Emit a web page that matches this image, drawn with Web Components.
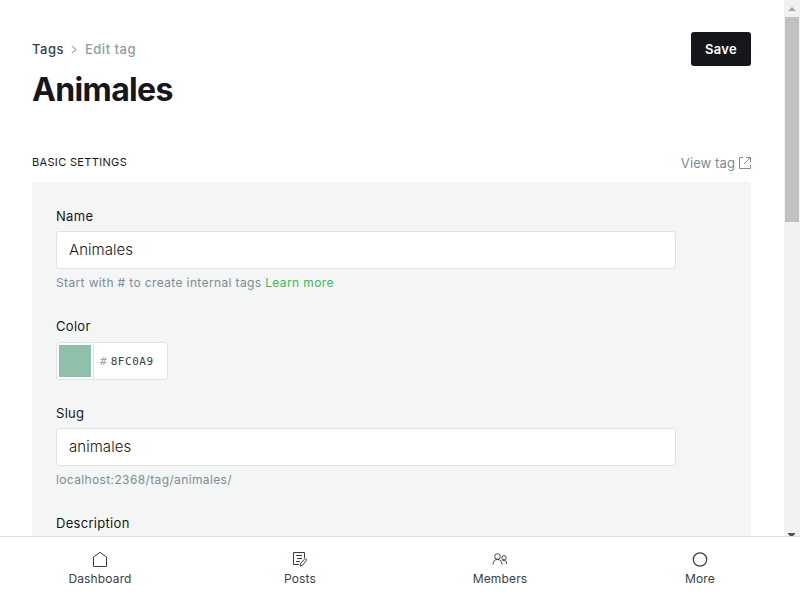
<!DOCTYPE html>
<html lang="en">
<head>
<meta charset="utf-8">
<title>Edit tag</title>
<style>
html,body{margin:0;height:100%;overflow:hidden;background:#fff}
body{font-family:Inter,"Open Sans",sans-serif;font-size:13px;color:#15171a}
</style>
</head>
<body>
<tag-app></tag-app>
<script>
const define=(name,html)=>{
  const t=document.createElement('template');
  t.innerHTML='<style>*{box-sizing:border-box}:host{box-sizing:border-box}</style>'+html;
  customElements.define(name,class extends HTMLElement{
    constructor(){super();this.attachShadow({mode:'open'}).append(t.content.cloneNode(true));}
  });
};

define('bread-crumbs',`<style>
:host{display:flex;align-items:center;height:20px;font-weight:500;letter-spacing:.5px;color:#343f52;line-height:20px}
svg{margin:0 8px 0 7px}
.cur{color:#8e9ca6}
</style><span><slot name="parent"></slot></span>
<svg width="6" height="9" viewBox="0 0 6 9" fill="none" stroke="#9aa8b1" stroke-width="1.1"><path d="M.8.8 5 4.5.8 8.2"/></svg>
<span class="cur"><slot></slot></span>`);

define('save-button',`<style>
:host{display:block}
button{display:block;width:60px;height:34px;border:0;border-radius:3px;padding:0;background:#15171a;color:#fff;font:600 13px/34px Inter,sans-serif;letter-spacing:.3px}
</style><button><slot></slot></button>`);

define('view-link',`<style>
:host{display:flex;align-items:center;gap:4px;color:#7c8b9a;letter-spacing:.1px;line-height:20px;padding-top:1px}
</style><span><slot></slot></span>
<svg width="12" height="12" viewBox="0 0 12 12" fill="none" stroke="#7c8b9a" stroke-width="1"><path d="M4 .5H.5v11h11V8M7 .5h4.500V5M11.500.5 5 7"/></svg>`);

define('form-field',`<style>
:host{display:block;width:620px}
.label{height:20px;line-height:20px;font-weight:400;letter-spacing:.3px;margin-bottom:5px}
.help{height:20px;line-height:20px;margin-top:4px;font-size:12px;color:#7c8b9a;letter-spacing:.37px}
:host([plain]) .help{display:none}
::slotted(a){color:#3fb94d}
</style><div class="label"><slot name="label"></slot></div><slot></slot><div class="help"><slot name="help"></slot></div>`);

define('text-box',`<style>
:host{display:block;height:38px;border:1px solid #dfe3e3;border-radius:3px;background:#fff;padding:0 12px;font-size:15px;font-weight:300;line-height:36px;color:#15171a;letter-spacing:.05px}
</style><slot></slot>`);

define('color-box',`<style>
:host{display:flex;width:112px;height:38px;margin-top:6px;border:1px solid #dfe3e3;border-radius:3px;background:#fff;font:11px/37px "DejaVu Sans Mono","Liberation Mono",monospace;color:#394047}
.sw{width:37px;height:36px;padding:2px;border-right:1px solid #dfe3e3}
.sw div{width:32px;height:32px;background:#8fc0a9}
.hash{color:#9aa5b1;margin:0 4px 0 6px}
.hex{letter-spacing:.55px}
</style><div class="sw"><div></div></div><span class="hash">#</span><span class="hex"><slot></slot></span>`);

define('nav-item',`<style>
:host{flex:1;display:flex;flex-direction:column;align-items:center;padding-top:14px;color:#394047}
.t{font-size:12px;line-height:16px;letter-spacing:.15px;margin-top:4px}
::slotted(svg){display:block;width:16px;height:16px;fill:none;stroke:#394047}
</style><slot name="icon"></slot><div class="t"><slot></slot></div>`);

define('mobile-nav',`<style>
:host{display:flex;height:64px;background:#fff;border-top:1px solid #dde1e5;flex:none}
</style><slot></slot>`);

define('scroll-bar',`<style>
:host{display:flex;flex-direction:column;width:16px;background:#f1f1f1;flex:none;height:536px;overflow:hidden}
svg{display:block;flex:none}
.th{height:205px;width:14px;margin-left:1px;background:#c1c1c1;flex:none}
.sp{flex:1}
</style><svg width="16" height="17"><path d="M4 11 8 7l4 4z" fill="#a3a3a3"/></svg><div class="th"></div><div class="sp"></div>
<svg width="16" height="3"><path d="M4 0h7v1l-2 2H6L4 1z" fill="#505050"/></svg>`);

define('tag-app',`<style>
:host{display:flex;flex-direction:column;height:600px;width:800px}
.top{display:flex;height:536px;overflow:hidden}
main{flex:1;padding:32px 33px 0 32px;min-width:0;overflow:hidden}
header{display:flex;justify-content:space-between;align-items:flex-start;height:120px}
bread-crumbs{margin-top:7px}
h1{margin:9px 0 0;font-size:32px;line-height:43px;font-weight:700;letter-spacing:-.64px}
.sec{display:flex;justify-content:space-between;align-items:center;height:20px}
.sec h4{margin:0;font-size:11px;font-weight:400;letter-spacing:.34px}
.card{margin-top:10px;height:400px;background:#f4f6f6;border-radius:3px;padding:24px}
form-field+form-field{margin-top:23px}
</style>
<div class="top"><main>
<header><div><bread-crumbs><span slot="parent">Tags</span>Edit tag</bread-crumbs><h1>Animales</h1></div><save-button>Save</save-button></header>
<div class="sec"><h4>BASIC SETTINGS</h4><view-link>View tag</view-link></div>
<div class="card">
<form-field><span slot="label">Name</span><text-box>Animales</text-box><span slot="help">Start with # to create internal tags </span><a slot="help">Learn more</a></form-field>
<form-field plain><span slot="label">Color</span><color-box>8FC0A9</color-box></form-field>
<form-field><span slot="label">Slug</span><text-box>animales</text-box><span slot="help">localhost:2368/tag/animales/</span></form-field>
<form-field plain><span slot="label">Description</span></form-field>
</div></main><scroll-bar></scroll-bar></div>
<mobile-nav>
<nav-item><svg slot="icon" viewBox="0 0 16 16"><path d="M1.500 15.500V6L8 1.300 14.500 6v9.500z"/></svg>Dashboard</nav-item>
<nav-item><svg slot="icon" viewBox="0 0 16 16"><path d="M7 13.500H1.500v-12h11V7M4 4.500h6M5 7.500h5M4 10.500h4"/><path d="m8.300 15.200.5-2.900L12.600 8c1.200-.9 2.500.3 1.800 1.500l-3.700 4.600z"/></svg>Posts</nav-item>
<nav-item><svg slot="icon" viewBox="0 0 16 16"><circle cx="5.500" cy="5.500" r="2.800"/><path d="M1 13.500q.3-5 4.500-5T10 13.500M10.500 9.500q3.800-1.200 4.200 3.500"/><circle cx="12" cy="6.800" r="2.200"/></svg>Members</nav-item>
<nav-item><svg slot="icon" viewBox="0 0 16 16"><circle cx="8" cy="8.500" r="6.700" stroke-width="1.300"/></svg>More</nav-item>
</mobile-nav>`);
</script>
</body>
</html>
